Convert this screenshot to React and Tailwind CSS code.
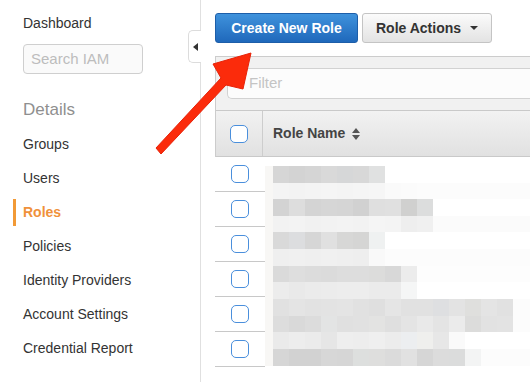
import React from "react";

const bands = [
  { h: 17, c: ["#d6d6d6", "#d3d3d3", "#d5d5d5", "#d9d9d9", "#d6d7d8", "#d8d8d8", "#e0e1e1"], tail: "#ffffff" },
  { h: 16, c: ["#f4f4f4", "#f3f3f3", "#f4f4f4", "#f5f5f5", "#f4f4f4", "#f5f5f5", "#f6f6f6", "#fafafa", "#fbfbfb"], tail: "#fcfcfc" },
  { h: 17, c: ["#d3d3d3", "#dddddd", "#d4d4d4", "#d6d6d6", "#d5d5d5", "#d1d1d1", "#dfdfdf", "#e0e0e0", "#d0d0cf", "#dcdddd"], tail: "#ffffff" },
  { h: 16, c: ["#f2f2f2", "#f3f3f3", "#f1f1f1", "#f2f2f2", "#f3f3f3", "#f2f2f2", "#f5f5f5", "#f4f4f4", "#eeeeee", "#f0f0f0"], tail: "#fbfbfb" },
  { h: 17, c: ["#d9d9d9", "#dcdddf", "#d6d6d6", "#e0e0e0", "#d7d7d6", "#d5d5d4", "#eff1f1"], tail: "#ffffff" },
  { h: 17, c: ["#efefef", "#f0f0f0", "#efefef", "#f0f0f0", "#efefef", "#eeeeee", "#f9f9f9", "#fcfcfc"], tail: "#fcfcfc" },
  { h: 16, c: ["#dadada", "#dedede", "#dcdcdc", "#dbdbdb", "#dddddd", "#dddddd", "#dcdcdb", "#d8d8d8", "#ececec"], tail: "#fdfdfd" },
  { h: 17, c: ["#ececec", "#e9e9e9", "#ebebeb", "#ececec", "#ededed", "#ededed", "#ebebeb", "#ebebeb", "#f5f6f6"], tail: "#ffffff" },
  { h: 17, c: ["#e1e1e1", "#e4e4e4", "#e2e2e2", "#e3e3e3", "#e4e4e4", "#e1e1e1", "#dfdfdf", "#e5e5e5", "#e1e1e1", "#e1e1e1", "#dedfe1", "#e3e3e3", "#dfdfdd", "#e4e4e4", "#e1e1e1"], tail: "#fcfcfc" },
  { h: 16, c: ["#dddddd", "#d9d9d9", "#dcdcdc", "#e3e4e4", "#e0e0e0", "#e1e1e1", "#e3e3e2", "#dfdfdf", "#e4e4e4", "#e9e9e9", "#e4e4e4", "#ebebeb", "#dcdcdb", "#e2e2e2", "#e3e3e3"], tail: "#fcfcfc" },
  { h: 17, c: ["#eaeaea", "#ededed", "#ebebeb", "#e6e6e6", "#eeeeee", "#ededed", "#efefef", "#ececec", "#eceef0", "#efefed", "#e7e7e7", "#fafafa"], tail: "#ffffff" },
  { h: 17, c: ["#d6d6d6", "#d2d2d2", "#d2d2d2", "#d7d7d7", "#d6d6d6", "#dddfde", "#dededd", "#dbdbdb", "#e1e1e1", "#d6d6d6", "#dcdcdc", "#dbdcdc", "#f3f4f4"], tail: "#fcfcfc" },
];

const nav = ["Groups", "Users", "Roles", "Policies", "Identity Providers", "Account Settings", "Credential Report"];

function Checkbox() {
  return <div className="w-[18px] h-[18px] rounded-[5px] border-[1.5px] border-[#4a8fdc] bg-white" />;
}

export default function App() {
  return (
    <div
      className="relative w-[530px] h-[382px] overflow-hidden bg-white flex text-[14px] text-[#333]"
      style={{ fontFamily: '"Liberation Sans", Arial, sans-serif' }}
    >
      {/* Sidebar */}
      <div className="w-[201px] shrink-0 border-r border-[#e0e0e0] pl-[23px] pt-[13px]">
        <div className="leading-[20px] text-[#333]">Dashboard</div>
        <div className="mt-[11px] w-[120px] h-[30px] rounded-[4px] border border-[#cfcfcf] bg-[#fafafa] flex items-center pl-[7px] text-[15px] text-[#bdbdbd]">
          Search IAM
        </div>
        <div className="mt-[26px] text-[17px] leading-[20px] text-[#8f8f8f]">Details</div>
        <div className="mt-[7px] flex flex-col">
          {nav.map((n) =>
            n === "Roles" ? (
              <div key={n} className="relative h-[34px] flex items-center font-bold text-[#f0913b]">
                <div className="absolute left-[-10px] top-[4px] w-[3px] h-[27px] bg-[#f29a36]" />
                {n}
              </div>
            ) : (
              <div key={n} className="h-[34px] flex items-center text-[#333]">
                {n}
              </div>
            )
          )}
        </div>
      </div>

      {/* Collapse tab */}
      <div className="absolute left-[188px] top-[30px] w-[13px] h-[33px] rounded-l-[5px] border border-r-0 border-[#dcdcdc] bg-white flex items-center justify-center">
        <div className="w-0 h-0 border-y-[4px] border-y-transparent border-r-[5px] border-r-[#333] ml-[1px]" />
      </div>

      {/* Main */}
      <div className="flex-1 pl-[14px] pt-[13px] flex flex-col">
        <div className="flex gap-[4px]">
          <div className="w-[143px] h-[30px] rounded-[3px] border border-[#1d5ea9] bg-gradient-to-b from-[#3f92dc] to-[#1f68bb] flex items-center justify-center text-white font-bold text-[14px]">
            Create New Role
          </div>
          <div className="w-[130px] h-[30px] rounded-[3px] border border-[#c4c4c4] bg-gradient-to-b from-[#fbfbfb] to-[#e3e3e3] flex items-center justify-center gap-[9px] text-[#333] font-bold text-[14px]">
            Role Actions
            <div className="w-0 h-0 border-x-[4px] border-x-transparent border-t-[4px] border-t-[#333]" />
          </div>
        </div>

        <div className="mt-[13px] border-t border-l border-[#cccccc]">
          <div className="h-[53px] bg-[#f1f1f1] pt-[11px] pl-[11px]">
            <div className="h-[31px] rounded-l-[5px] border border-r-0 border-[#d2d2d2] bg-[#fcfcfc] flex items-center pl-[21px] text-[15px] text-[#c4c4c4]">
              Filter
            </div>
          </div>
          <div className="h-[47px] border-t border-b border-[#c9c9c9] bg-gradient-to-b from-[#f2f2f2] to-[#e1e1e1] flex">
            <div className="w-[47px] border-r border-[#cdcdcd] flex items-center justify-center">
              <Checkbox />
            </div>
            <div className="pl-[10px] flex items-center gap-[7px] font-bold text-[#444]">
              Role Name
              <svg width="8" height="12" viewBox="0 0 8 12">
                <path d="M4 0 L8 5 L0 5 Z M0 7 L8 7 L4 12 Z" fill="#555" />
              </svg>
            </div>
          </div>
        </div>

        {/* Body */}
        <div className="flex">
          <div className="w-[50px] shrink-0 flex flex-col">
            {[0, 1, 2, 3, 4, 5].map((i) => (
              <div key={i} className="h-[35px] border-b border-[#c8c8c8] flex items-center justify-center">
                <Checkbox />
              </div>
            ))}
          </div>
          <div className="flex-1 pt-[9px] flex flex-col">
            {bands.map((b, i) => (
              <div key={i} className="flex" style={{ height: b.h }}>
                <div className="w-[8px] shrink-0 bg-[#f8f7f5]" />
                {b.c.map((col, j) => (
                  <div key={j} className="w-[16px] shrink-0" style={{ backgroundColor: col }} />
                ))}
                <div className="flex-1" style={{ backgroundColor: b.tail }} />
              </div>
            ))}
          </div>
        </div>
      </div>

      {/* Red arrow annotation */}
      <svg className="absolute left-0 top-0 pointer-events-none" width="530" height="382" viewBox="0 0 530 382">
        <path
          d="M156 148 L161 154 L226 85 L243 89 L251 53 L213 64 L221 78 Z"
          fill="#fb2b0b"
          stroke="#e82208"
          strokeWidth="1"
          strokeLinejoin="round"
        />
      </svg>
    </div>
  );
}
